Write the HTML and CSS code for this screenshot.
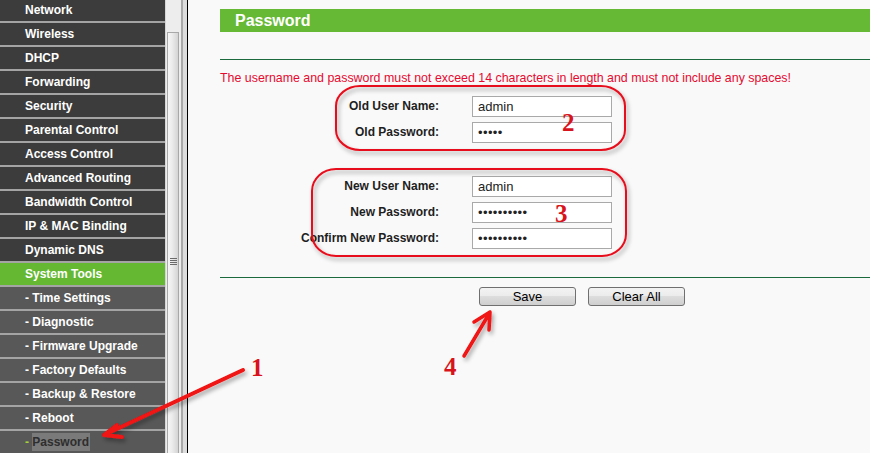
FILE: index.html
```html
<!DOCTYPE html>
<html>
<head>
<meta charset="utf-8">
<title>Password</title>
<link rel="stylesheet" href="styles.css">
</head>
<body>
<div class="page">
  <nav class="menu">
    <div class="item">Network</div>
    <div class="item">Wireless</div>
    <div class="item">DHCP</div>
    <div class="item">Forwarding</div>
    <div class="item">Security</div>
    <div class="item">Parental Control</div>
    <div class="item">Access Control</div>
    <div class="item">Advanced Routing</div>
    <div class="item">Bandwidth Control</div>
    <div class="item">IP &amp; MAC Binding</div>
    <div class="item">Dynamic DNS</div>
    <div class="item active">System Tools</div>
    <div class="item sub">- Time Settings</div>
    <div class="item sub">- Diagnostic</div>
    <div class="item sub">- Firmware Upgrade</div>
    <div class="item sub">- Factory Defaults</div>
    <div class="item sub">- Backup &amp; Restore</div>
    <div class="item sub">- Reboot</div>
    <div class="item sub current"><span class="dash">-</span> <span class="sel">Password</span></div>
  </nav>
  <div class="scrollbar">
    <div class="thumb"><div class="grip"></div></div>
  </div>
  <div class="frame"></div>
  <main class="main">
    <div class="title">Password</div>
    <div class="rule"></div>
    <p class="note">The username and password must not exceed 14 characters in length and must not include any spaces!</p>
    <div class="group">
      <label class="label">Old User Name:</label>
      <input class="field" type="text" value="admin">
      <label class="label">Old Password:</label>
      <input class="field" type="password" value="admin">
    </div>
    <div class="group second">
      <label class="label">New User Name:</label>
      <input class="field" type="text" value="admin">
      <label class="label">New Password:</label>
      <input class="field" type="password" value="1234567890">
      <label class="label">Confirm New Password:</label>
      <input class="field" type="password" value="1234567890">
    </div>
    <div class="rule lower"></div>
    <div class="buttons">
      <button class="btn">Save</button>
      <button class="btn">Clear All</button>
    </div>
  </main>
  <svg class="annot" width="870" height="453" viewBox="0 0 870 453">
    <defs>
      <filter id="sh" x="-20%" y="-30%" width="140%" height="170%">
        <feDropShadow dx="2" dy="3" stdDeviation="2" flood-color="#000" flood-opacity="0.35"/>
      </filter>
    </defs>
    <g fill="none" stroke="#e8101c" stroke-width="2" filter="url(#sh)">
      <rect x="336" y="86" width="289" height="64" rx="24" ry="20"/>
      <rect x="312" y="169" width="314" height="87" rx="24" ry="22"/>
    </g>
    <g fill="none" stroke="#f01212" stroke-linecap="round" stroke-linejoin="round" filter="url(#sh)">
      <path d="M243 370 L106 434 M104 435 L117 425 M104 435 L122 437" stroke-width="4"/>
      <path d="M464 356 L489 314 M490 312 L474 322 M490 312 L489 330" stroke-width="3.5"/>
    </g>
    <g class="nums">
      <text x="562" y="131">2</text>
      <text x="555" y="222">3</text>
      <text x="251" y="376">1</text>
      <text x="444" y="375">4</text>
    </g>
  </svg>
</div>
</body>
</html>
```

FILE: styles.css
```css
html, body {
  margin: 0;
  padding: 0;
}
body {
  width: 870px;
  height: 453px;
  overflow: hidden;
  background: #f9f9f9;
  font-family: "Liberation Sans", Arial, sans-serif;
}
.page {
  position: relative;
  display: flex;
  width: 870px;
  height: 453px;
  overflow: hidden;
}
.menu {
  width: 165px;
  flex: none;
  margin-top: -1px;
  background: #3c3c3c;
}
.item {
  height: 22px;
  line-height: 22px;
  border-bottom: 2px solid #a4a4a4;
  background: #3c3c3c;
  color: #ffffff;
  font-size: 12px;
  font-weight: bold;
  padding-left: 25px;
  white-space: nowrap;
}
.item.active {
  background: #64b832;
}
.item.sub {
  background: #585858;
}
.item.current {
  color: #333333;
}
.dash {
  color: #a6cf3a;
}
.sel {
  background: #7a7a7a;
  color: #2e2e2e;
  padding: 2px 1px 2px 0;
}
.scrollbar {
  width: 15px;
  flex: none;
  background: #ededed;
  border-left: 1px solid #d6d6d6;
  padding-top: 32px;
  box-sizing: content-box;
}
.thumb {
  width: 12px;
  height: 460px;
  margin-left: 1px;
  border: 1px solid #a8a8a8;
  border-bottom: none;
  background: linear-gradient(to right, #f6f6f6 0%, #ececec 40%, #d4d4d4 100%);
  box-sizing: border-box;
  display: flex;
  justify-content: center;
  padding-top: 225px;
}
.grip {
  width: 7px;
  height: 8px;
  background: repeating-linear-gradient(to bottom, #6a6a6a 0, #6a6a6a 1px, transparent 1px, transparent 2px);
}
.frame {
  width: 4px;
  flex: none;
  border-left: 2px solid #a9a9a9;
  background: #dddddd;
  border-right: 1px solid #000000;
}
.main {
  flex: 1;
  min-width: 0;
  padding-left: 32px;
  background: #f9f9f9;
}
.title {
  margin-top: 9px;
  height: 23px;
  line-height: 23px;
  background: #66b934;
  color: #ffffff;
  font-size: 16px;
  font-weight: bold;
  padding-left: 15px;
}
.rule {
  height: 1px;
  background: #1a6a3e;
  margin-top: 27px;
}
.rule.lower {
  margin-top: 28px;
}
.note {
  margin: 11px 0 0 0;
  font-size: 12.4px;
  line-height: 14px;
  color: #e60a30;
  white-space: nowrap;
}
.group {
  display: grid;
  grid-template-columns: 219px 140px;
  column-gap: 33px;
  row-gap: 5px;
  margin-top: 11px;
}
.group.second {
  margin-top: 33px;
}
.label {
  text-align: right;
  font-size: 12px;
  font-weight: bold;
  color: #1e1e1e;
  line-height: 21px;
  white-space: nowrap;
}
.field {
  width: 140px;
  height: 21px;
  box-sizing: border-box;
  margin: 0;
  border: 1px solid #a9a9a9;
  background: #ffffff;
  padding: 0 0 0 5px;
  font-family: "Liberation Sans", Arial, sans-serif;
  font-size: 13px;
  color: #222222;
  outline: none;
}
.field[type="password"] {
  letter-spacing: 0.4px;
}
.buttons {
  display: flex;
  gap: 12px;
  margin-top: 9px;
  padding-left: 259px;
}
.btn {
  width: 97px;
  height: 19px;
  margin: 0;
  padding: 0;
  border: 1px solid #707070;
  border-radius: 3px;
  background: linear-gradient(to bottom, #f3f3f3 0%, #ebebeb 50%, #dddddd 50%, #cfcfcf 100%);
  font-family: "Liberation Sans", Arial, sans-serif;
  font-size: 13px;
  line-height: 17px;
  color: #000000;
}
.annot {
  position: absolute;
  left: 0;
  top: 0;
  pointer-events: none;
}
.nums text {
  font-family: "Liberation Serif", "Times New Roman", serif;
  font-weight: bold;
  font-size: 25px;
  fill: #d8131b;
}
```
